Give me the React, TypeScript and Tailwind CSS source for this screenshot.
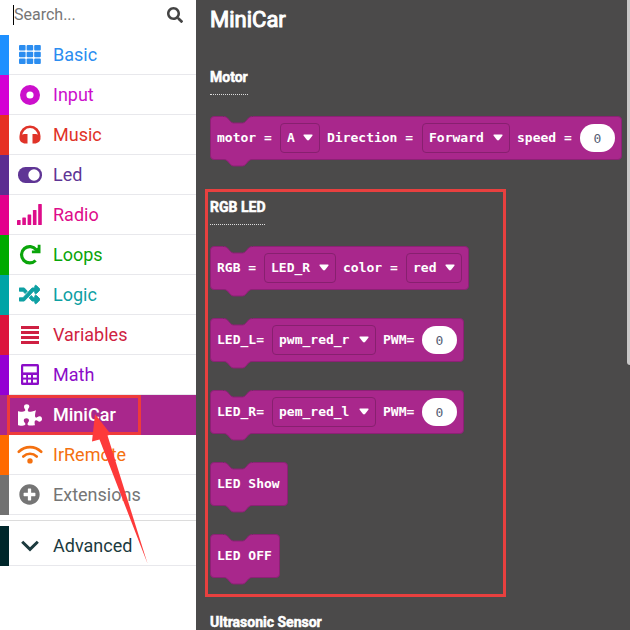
import React from "react";
import { FaPlusCircle, FaPuzzlePiece, FaRandom, FaSearch } from "react-icons/fa";

function GridIcon() {
  return (
    <svg viewBox="0 0 22 19" className="h-[19px] w-[22px]" fill="currentColor">
      {[0, 6.7, 13.4].map((y) =>
        [0, 7.6, 15.2].map((x) => <rect key={`${x}-${y}`} x={x} y={y} width="6.6" height="5.6" rx="1" />),
      )}
    </svg>
  );
}

function DiscIcon() {
  return (
    <svg viewBox="0 0 20 20" className="h-5 w-5" fill="none" stroke="currentColor">
      <circle cx="10" cy="10" r="6.8" strokeWidth="6.4" />
    </svg>
  );
}

function HeadphonesIcon() {
  return (
    <svg viewBox="0 0 22 19" className="h-[19px] w-[22px]">
      <path d="M1.800 12.500V11a9.200 9.200 0 0 1 18.400 0v1.500" fill="none" stroke="currentColor" strokeWidth="2.600" />
      <path d="M8.500 9v9.500H6.500C3 18.500.5 16 .5 13.500S3 9 6.500 9zM13.500 9v9.500h2c3.500 0 6-2.500 6-5S19 9 15.500 9z" fill="currentColor" />
    </svg>
  );
}

function ToggleIcon() {
  return (
    <svg viewBox="0 0 24 16" className="h-4 w-6">
      <rect width="24" height="16" rx="7.5" fill="currentColor" />
      <circle cx="16" cy="8" r="5.7" fill="#fff" />
    </svg>
  );
}

function SignalIcon() {
  return (
    <svg viewBox="0 0 25 21" className="h-[21px] w-[25px]" fill="currentColor">
      <rect x="0" y="16" width="3.6" height="5" rx=".6" />
      <rect x="5.300" y="13.500" width="3.600" height="7.500" rx=".6" />
      <rect x="10.600" y="10.500" width="3.600" height="10.500" rx=".6" />
      <rect x="15.900" y="6" width="3.600" height="15" rx=".6" />
      <rect x="21.200" y="0" width="3.600" height="21" rx=".6" />
    </svg>
  );
}

function RepeatIcon() {
  return (
    <svg viewBox="0 0 22 21" className="h-[21px] w-[22px]">
      <path d="M16.600 16.500A8.200 8.200 0 1 1 17.200 5.700" fill="none" stroke="currentColor" strokeWidth="3.200" />
      <path d="M21.500.8v8.400h-8.600V6.600l3-.2 2.800-2.800V.8z" fill="currentColor" />
    </svg>
  );
}

function LinesIcon() {
  return (
    <svg viewBox="0 0 18 18" className="h-[18px] w-[18px]" fill="currentColor">
      <rect y="0" width="18" height="3" />
      <rect y="5" width="18" height="3" />
      <rect y="10" width="18" height="3" />
      <rect y="15" width="18" height="3" />
    </svg>
  );
}

function CalculatorIcon() {
  return (
    <svg viewBox="0 0 18 21" className="h-[21px] w-[18px]">
      <rect width="18" height="21" rx="1.500" fill="currentColor" />
      <g fill="#fff">
        <rect x="2.200" y="2.400" width="13.600" height="6" />
        <rect x="2.200" y="11" width="3" height="2.600" />
        <rect x="7" y="11" width="3" height="2.600" />
        <rect x="12" y="11" width="3.800" height="2.600" />
        <rect x="2.200" y="15.600" width="3" height="3" />
        <rect x="7" y="15.600" width="3" height="3" />
        <rect x="12" y="15.600" width="3.800" height="3" />
      </g>
    </svg>
  );
}

function WifiIcon() {
  return (
    <svg viewBox="0 0 26 19" className="h-[19px] w-[26px]" fill="none" stroke="currentColor" strokeWidth="2.600" strokeLinecap="round">
      <path d="M1.800 6.800c6.400-6.200 16-6.200 22.400 0M6.300 11.500c3.900-3.700 9.500-3.700 13.400 0" />
      <circle cx="13" cy="15.900" r="2.700" fill="currentColor" stroke="none" />
    </svg>
  );
}

function ChevronIcon() {
  return (
    <svg viewBox="0 0 18 12" className="h-3 w-[18px]" fill="none" stroke="currentColor" strokeWidth="3">
      <path d="M1.200 1.800 9 9.400l7.800-7.600" />
    </svg>
  );
}

type Category = {
  name: string;
  bar: string;
  text: string;
  icon: React.ReactNode;
  active?: boolean;
};

const categories: Category[] = [
  { name: "Basic", bar: "bg-[#1e90ff]", text: "text-[#2b8df0]", icon: <GridIcon /> },
  { name: "Input", bar: "bg-[#d400d4]", text: "text-[#cc0fcc]", icon: <DiscIcon /> },
  { name: "Music", bar: "bg-[#e63022]", text: "text-[#e03328]", icon: <HeadphonesIcon /> },
  { name: "Led", bar: "bg-[#5c2d91]", text: "text-[#5f3595]", icon: <ToggleIcon /> },
  { name: "Radio", bar: "bg-[#e3008c]", text: "text-[#dd0c8a]", icon: <SignalIcon /> },
  { name: "Loops", bar: "bg-[#00aa00]", text: "text-[#0aa50a]", icon: <RepeatIcon /> },
  {
    name: "Logic",
    bar: "bg-[#00a4a6]",
    text: "text-[#0ea0a3]",
    icon: <FaRandom size={21} stroke="currentColor" strokeWidth={22} />,
  },
  { name: "Variables", bar: "bg-[#dc143c]", text: "text-[#cf1f42]", icon: <LinesIcon /> },
  { name: "Math", bar: "bg-[#9400d3]", text: "text-[#8c0dc8]", icon: <CalculatorIcon /> },
  { name: "MiniCar", bar: "bg-[#a9278c]", text: "text-white", icon: <FaPuzzlePiece size={24} />, active: true },
  { name: "IrRemote", bar: "bg-[#ff6a00]", text: "text-[#f4700f]", icon: <WifiIcon /> },
  { name: "Extensions", bar: "bg-[#717171]", text: "text-[#757575]", icon: <FaPlusCircle size={21} /> },
];

function CategoryRow({ item }: { item: Category }) {
  return (
    <button
      type="button"
      className={`flex h-10 w-full items-stretch text-left text-lg ${item.text} ${
        item.active ? "bg-[#a9278c] font-medium" : ""
      }`}
    >
      <span className={`w-[9px] shrink-0 ${item.bar}`} />
      <span
        className={`flex flex-1 items-center border-b pl-[7px] ${
          item.active ? "border-[#a9278c]" : "border-[#e8e8ec]"
        }`}
      >
        <span className="flex w-[27px] justify-center">{item.icon}</span>
        <span className="pl-[10px]">{item.name}</span>
      </span>
    </button>
  );
}

function Sidebar() {
  return (
    <nav aria-label="Toolbox" className="relative w-[196px] shrink-0 bg-white">
      <div className="flex h-[35px] items-center px-[13px] pb-[6px]">
        <input
          type="text"
          aria-label="Search"
          placeholder="Search..."
          className="h-5 w-0 flex-1 border-l border-black text-base outline-none placeholder:text-[#767676]"
        />
        <button type="button" aria-label="Run search" className="text-[#444]">
          <FaSearch size={16} />
        </button>
      </div>
      {categories.map((item) => (
        <CategoryRow key={item.name} item={item} />
      ))}
      <hr className="mt-[5px] mb-[5px] border-[#dcdcdc]" />
      <CategoryRow
        item={{ name: "Advanced", bar: "bg-[#00272b]", text: "text-[#1c3a3e]", icon: <ChevronIcon /> }}
      />
      <div className="pointer-events-none absolute top-[395px] left-[7px] h-10 w-[134px] border-3 border-[#ee3b3b]" />
    </nav>
  );
}

function Label({ children, width }: { children: string; width: string }) {
  return <span className={`whitespace-pre ${width}`}>{children}</span>;
}

function Dropdown({ name, value, width }: { name: string; value: string; width: string }) {
  return (
    <span className={`relative flex h-[30px] ${width}`}>
      <select
        aria-label={name}
        defaultValue={value}
        className="w-full appearance-none rounded border border-[#87206f] bg-transparent pl-[6px] font-bold outline-none"
      >
        <option>{value}</option>
      </select>
      <svg viewBox="0 0 10 7" className="pointer-events-none absolute top-[11px] right-[7px] h-[7px] w-[10px]" fill="#fff">
        <path d="M1.200.5h7.600q1.200 0 .6 1.200L6 6.100q-1 .9-2 0L.6 1.700Q0 .5 1.200.5z" />
      </svg>
    </span>
  );
}

function NumberField({ name }: { name: string }) {
  return (
    <input
      type="text"
      aria-label={name}
      defaultValue="0"
      className="h-7 w-[35px] rounded-full bg-white text-center font-normal text-[#575e75] outline-none"
    />
  );
}

function Block({ children }: { children: React.ReactNode }) {
  return (
    <div className="relative mb-7 flex h-11 w-max items-center gap-[7px] rounded border border-[#8c2175] bg-[#a9278c] px-[6px] font-['DejaVu_Sans_Mono','Liberation_Mono',monospace] text-[13px] font-bold text-white">
      <svg viewBox="0 0 30 8" className="absolute -top-px left-3 h-2 w-[30px]">
        <path d="M0 0h30v.5h-1q-2 0-3.500 1.500l-3 3.500q-1.500 1.500-3 1.500h-9q-1.500 0-3-1.500l-3-3.500Q3 .5 1 .5H0z" fill="#4b4a4a" />
        <path d="M1 .5q2 0 3.500 1.500l3 3.500q1.500 1.500 3 1.500h9q1.500 0 3-1.500l3-3.500Q27 .5 29 .5" fill="none" stroke="#8c2175" />
      </svg>
      {children}
      <svg viewBox="0 0 30 10" className="absolute -bottom-[9px] left-3 h-[10px] w-[30px]">
        <path d="M1 0v1.500q2 0 3.500 1.500l3 3.500q1.500 1.500 3 1.500h9q1.500 0 3-1.500l3-3.500Q27 1.500 29 1.500V0z" fill="#a9278c" />
        <path d="M1 1.500q2 0 3.500 1.500l3 3.500q1.500 1.500 3 1.500h9q1.500 0 3-1.500l3-3.500Q27 1.500 29 1.500" fill="none" stroke="#8c2175" />
      </svg>
    </div>
  );
}

function GroupTitle({ children }: { children: string }) {
  return (
    <h2 className="mb-[21px] flex h-[25px] w-max items-start border-b border-dotted border-[#ddd] text-sm leading-[14px] font-bold [-webkit-text-stroke:0.5px_white]">
      {children}
    </h2>
  );
}

function Flyout() {
  return (
    <main className="relative min-w-0 flex-1 bg-[#4b4a4a] text-white">
      <div className="h-full overflow-x-hidden overflow-y-auto pl-[14px] [scrollbar-width:none]">
        <h1 className="mb-[38px] pt-2 text-[22px] leading-6 font-normal [-webkit-text-stroke:1px_white]">MiniCar</h1>
        <GroupTitle>Motor</GroupTitle>
        <Block>
          <Label width="w-14">motor =</Label>
          <Dropdown name="Motor" value="A" width="w-10" />
          <Label width="w-[88px]">Direction =</Label>
          <Dropdown name="Direction" value="Forward" width="w-[88px]" />
          <Label width="w-14">speed =</Label>
          <NumberField name="Speed" />
        </Block>

        <div className="pt-3">
          <GroupTitle>RGB LED</GroupTitle>
          <Block>
            <Label width="w-10">RGB =</Label>
            <Dropdown name="RGB light" value="LED_R" width="w-[72px]" />
            <Label width="w-14">color =</Label>
            <Dropdown name="Color" value="red" width="w-14" />
          </Block>
          <Block>
            <Label width="w-12">LED_L=</Label>
            <Dropdown name="Left light" value="pwm_red_r" width="w-[104px]" />
            <Label width="w-8">PWM=</Label>
            <NumberField name="Left PWM" />
          </Block>
          <Block>
            <Label width="w-12">LED_R=</Label>
            <Dropdown name="Right light" value="pem_red_l" width="w-[104px]" />
            <Label width="w-8">PWM=</Label>
            <NumberField name="Right PWM" />
          </Block>
          <Block>
            <Label width="w-16">LED Show</Label>
          </Block>
          <Block>
            <Label width="w-14">LED OFF</Label>
          </Block>
        </div>
        <div className="pt-[9px]">
          <GroupTitle>Ultrasonic Sensor</GroupTitle>
        </div>
      </div>

      <div className="pointer-events-none absolute top-[189px] left-[9px] h-[408px] w-[301px] border-3 border-[#e8403f]" />
      <div className="absolute top-0 right-0 h-[365px] w-[3px] rounded-bl bg-[#c9c8c8]" />
    </main>
  );
}

export default function App() {
  return (
    <div className="relative flex h-screen overflow-hidden bg-white font-[Roboto,'Liberation_Sans',sans-serif]">
      <Sidebar />
      <Flyout />
      <svg viewBox="0 0 60 150" className="pointer-events-none absolute top-[414px] left-[90px] h-[150px] w-[60px]">
        <path d="M5 0 21 20.500 17.500 21.500 57.500 149.500 9.500 25.500 2 27.500z" fill="#fd3a3a" />
      </svg>
    </div>
  );
}
